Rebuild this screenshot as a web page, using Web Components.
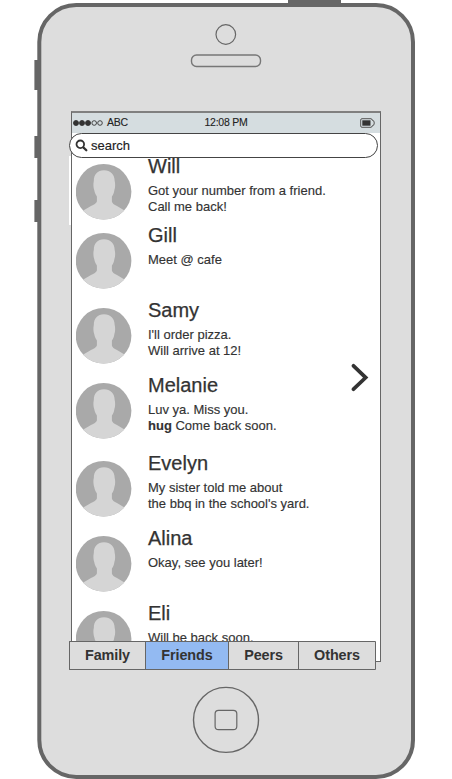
<!DOCTYPE html>
<html lang="en">
<head>
<meta charset="utf-8">
<title>Messages</title>
<style>
html,body{margin:0;background:#fff;height:779px;overflow:hidden}
body{font-family:"Liberation Sans",Arial,sans-serif;color:#333}
</style>
</head>
<body>
<phone-frame>
  <status-bar carrier="ABC" time="12:08 PM"></status-bar>
  <search-field>search</search-field>
  <message-list>
    <message-row name="Will" style="height:69px">Got your number from a friend.<br>Call me back!</message-row>
    <message-row name="Gill" style="height:75px">Meet @ cafe</message-row>
    <message-row name="Samy" style="height:75px">I'll order pizza.<br>Will arrive at 12!</message-row>
    <message-row name="Melanie" style="height:78px">Luv ya. Miss you.<br><b>hug</b> Come back soon.</message-row>
    <message-row name="Evelyn" style="height:75px">My sister told me about<br>the bbq in the school's yard.</message-row>
    <message-row name="Alina" style="height:75px">Okay, see you later!</message-row>
    <message-row name="Eli" style="height:75px">Will be back soon.</message-row>
  </message-list>
  <tab-bar>
    <tab-item style="width:76px">Family</tab-item>
    <tab-item active style="width:83px">Friends</tab-item>
    <tab-item style="width:70px">Peers</tab-item>
    <tab-item style="width:77px">Others</tab-item>
  </tab-bar>
</phone-frame>
<script>
function define(name, html, setup) {
  customElements.define(name, class extends HTMLElement {
    constructor() {
      super();
      this.attachShadow({mode: 'open'}).innerHTML = html;
    }
    connectedCallback() { if (setup) setup(this, this.shadowRoot); }
  });
}

define('user-avatar', `
<style>:host{display:block;width:56px;height:56px;flex:none}svg{display:block}</style>
<svg width="56" height="56" viewBox="0 0 56 56">
  <clipPath id="c"><circle cx="27.6" cy="27.8" r="27.8"/></clipPath>
  <g clip-path="url(#c)">
    <rect width="56" height="56" fill="#a9a9a9"/>
    <path d="M28 6.3C21.5 6.3 17.8 10.5 17.8 17C17 20 17.5 24 18.2 26C18.8 29.3 20 31 20.9 32.4V37.5C20.3 39.4 18 40.5 15 42L7.3 46.4L0 56H56L48.5 46.4L41 42C38 40.5 36.3 39.4 35.9 37.5V32.4C37.2 30.8 38 29 38.4 26C39.2 24 39.5 20 38.7 17C38.7 10.5 34.5 6.3 28 6.3Z" fill="#d5d5d5"/>
  </g>
</svg>`);

define('message-row', `
<style>
:host{display:flex;gap:16px;flex:none;white-space:nowrap}
.text{margin-top:-10px}
h3{margin:0 0 5px;font-size:20px;line-height:24px;font-weight:400;-webkit-text-stroke:.25px #333}
p{margin:0;font-size:13px;line-height:16px;-webkit-text-stroke:.15px #333}
</style>
<user-avatar></user-avatar>
<div class="text"><h3></h3><p><slot></slot></p></div>`,
(el, root) => { root.querySelector('h3').textContent = el.getAttribute('name'); });

define('message-list', `
<style>
:host{box-sizing:border-box;display:flex;flex:none;flex-direction:column;height:483px;padding:6px 0 0 4px;overflow:hidden;position:relative}
svg{position:absolute;left:279px;top:205px}
</style>
<slot></slot>
<svg width="20" height="30" viewBox="0 0 20 30"><path d="M2.5 2.8L14.7 14.6L2.5 26.2" fill="none" stroke="#333" stroke-width="3.7" stroke-linecap="round"/></svg>`);

define('status-bar', `
<style>
:host{display:grid;flex:none;grid-template-columns:1fr auto 1fr;align-items:center;height:20px;background:#d5dde0;font-size:10.5px;letter-spacing:-.25px;line-height:17px;padding:0 5px 0 1px;color:#222;-webkit-text-stroke:.1px #222}
.left{display:flex;align-items:center;gap:4px}
.right{display:flex;justify-content:flex-end}
.time{padding-left:4px;padding-bottom:2px}
.carrier{padding-bottom:2px}
svg{display:block}
</style>
<div class="left"><svg width="30" height="8" viewBox="0 0 30 8" stroke="#333" stroke-width=".9" fill="#333"><circle cx="3" cy="4" r="2.5"/><circle cx="9" cy="4" r="2.5"/><circle cx="15" cy="4" r="2.5"/><circle cx="21.2" cy="4" r="2.3" fill="none"/><circle cx="27" cy="4" r="2.3" fill="none"/></svg><span class="carrier"></span></div>
<span class="time"></span>
<div class="right"><svg width="15" height="10" viewBox="0 0 15 10"><path d="M2 .7H11Q12 .7 12 2Q14.3 2.2 14.3 5Q14.3 7.8 12 8Q12 9.3 11 9.3H2Q.7 9.3 .7 8V2Q.7 .7 2 .7Z" fill="none" stroke="#555" stroke-width="1"/><path d="M2.3 2.3H10.5V7.7H2.3Z" fill="#333"/></svg></div>`,
(el, root) => {
  root.querySelector('.carrier').textContent = el.getAttribute('carrier');
  root.querySelector('.time').textContent = el.getAttribute('time');
});

define('search-field', `
<style>
:host{box-sizing:border-box;display:flex;flex:none;align-items:center;gap:3px;height:25px;margin:0 2px 0 -3px;padding-left:5px;border:1px solid #444;border-radius:13px;background:#fff;font-size:13px;position:relative;z-index:1;color:#222;-webkit-text-stroke:.15px #222}
svg{display:block}
</style>
<svg width="13" height="13" viewBox="0 0 13 13" fill="none" stroke="#333" stroke-linecap="round"><circle cx="5.3" cy="5.3" r="3.8" stroke-width="1.8"/><path d="M8.5 8.5L11.3 11.3" stroke-width="2.3"/></svg>
<slot></slot>`);

define('tab-bar', `
<style>:host{box-sizing:border-box;display:flex;flex:none;width:307px;height:29px;margin-left:-3px;border:1px solid #666;border-right:0;border-radius:1px;background:#ddd;position:relative}</style>
<slot></slot>`);

define('tab-item', `
<style>
:host{box-sizing:border-box;display:flex;align-items:center;justify-content:center;padding-bottom:2px;border-right:1px solid #666;font-size:14.4px;letter-spacing:-.1px;font-weight:700}
:host([active]){background:#93baf2}
</style>
<slot></slot>`);

define('phone-frame', `
<style>
:host{box-sizing:border-box;display:block;position:relative;width:452px;height:779px;padding-top:111px}
.body{position:absolute;inset:0}
.screen{box-sizing:border-box;position:relative;width:310px;height:551px;margin-left:71px;border:1px solid #666;border-top:2px solid #808080;background:#fff;display:flex;flex-direction:column}
</style>
<svg class="body" width="452" height="779" viewBox="0 0 452 779">
  <path d="M288 0H341V5H288ZM34.4 60H40V90H34.4ZM34.4 136H40V158H34.4ZM34.4 200H40V222H34.4Z" fill="#666"/>
  <rect x="39.3" y="5" width="373.7" height="772" rx="37" fill="#ddd" stroke="#666" stroke-width="4"/>
  <g fill="none" stroke="#666" stroke-width="1.2">
    <circle cx="225.8" cy="34.5" r="9.8"/>
    <rect x="191.5" y="55" width="69" height="11.5" rx="5" stroke="#777" stroke-width="1.4"/>
    <circle cx="226" cy="719.9" r="32.5" stroke-width="1.4"/>
    <rect x="215.1" y="710.3" width="21.7" height="19.4" rx="3.5"/>
  </g>
  <rect x="69" y="156" width="2" height="69" fill="#fff"/>
</svg>
<div class="screen"><slot></slot></div>`);
</script>
</body>
</html>
